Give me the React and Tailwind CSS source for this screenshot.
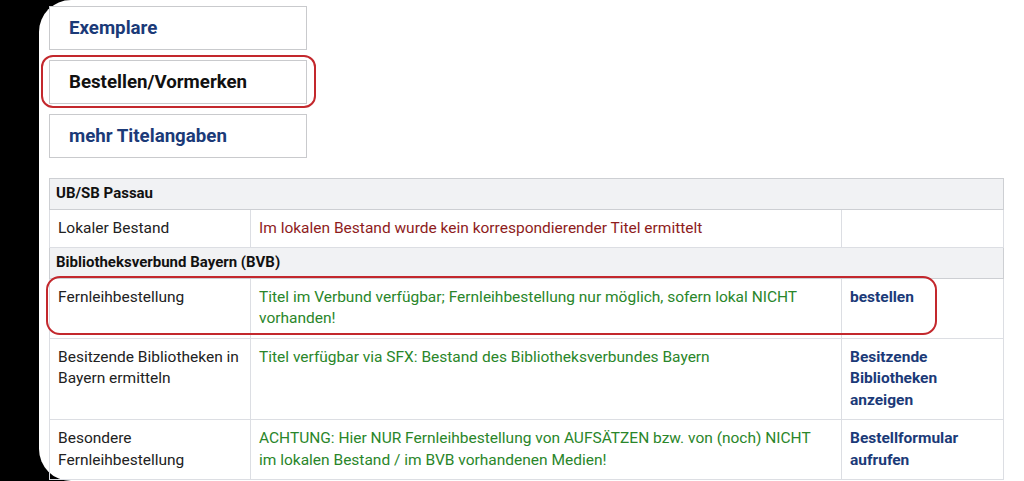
import React from 'react';

const rows = [
  { type: 'head', label: 'UB/SB Passau' },
  {
    type: 'row',
    label: 'Lokaler Bestand',
    text: 'Im lokalen Bestand wurde kein korrespondierender Titel ermittelt',
    tone: 'red',
    link: '',
  },
  { type: 'head', label: 'Bibliotheksverbund Bayern (BVB)' },
  {
    type: 'row',
    label: 'Fernleihbestellung',
    text: 'Titel im Verbund verfügbar; Fernleihbestellung nur möglich, sofern lokal NICHT vorhanden!',
    tone: 'green',
    link: 'bestellen',
  },
  {
    type: 'row',
    label: 'Besitzende Bibliotheken in Bayern ermitteln',
    text: 'Titel verfügbar via SFX: Bestand des Bibliotheksverbundes Bayern',
    tone: 'green',
    link: 'Besitzende Bibliotheken anzeigen',
  },
  {
    type: 'row',
    label: 'Besondere Fernleihbestellung',
    text: 'ACHTUNG: Hier NUR Fernleihbestellung von AUFSÄTZEN bzw. von (noch) NICHT im lokalen Bestand / im BVB vorhandenen Medien!',
    tone: 'green',
    link: 'Bestellformular aufrufen',
  },
];

const TabButton = ({ label, active, marked }) => (
  <div className="relative w-[258px]">
    <div className="h-[44px] border border-[#c9cacd] bg-white flex items-center pl-[19px]">
      <span className={`text-[18.7px] font-bold ${active ? 'text-[#111]' : 'text-[#1b3a78]'}`}>{label}</span>
    </div>
    {marked && (
      <div className="absolute -left-[8px] -right-[9px] -top-[5px] -bottom-[4px] rounded-[12px] border-2 border-[#c3282d]" />
    )}
  </div>
);

export default function App() {
  return (
    <div className="bg-black h-[481px] w-[1024px] overflow-hidden" style={{ fontFamily: 'Roboto, "Liberation Sans", sans-serif' }}>
      <div className="ml-[39px] h-[481px] bg-white rounded-tl-[32px] rounded-bl-[32px] pl-[10px] pt-[6px]">
        {/* Tabs */}
        <div className="flex flex-col gap-[10px]">
          <TabButton label="Exemplare" />
          <TabButton label="Bestellen/Vormerken" active marked />
          <TabButton label="mehr Titelangaben" />
        </div>

        {/* Availability table */}
        <div className="relative mt-[20px] w-[954px]">
          <table className="w-full table-fixed border-collapse text-[15.5px] leading-[21.5px]">
            <colgroup>
              <col className="w-[201px]" />
              <col className="w-[591px]" />
              <col className="w-[162px]" />
            </colgroup>
            <tbody>
              {rows.map((r, i) =>
                r.type === 'head' ? (
                  <tr key={i} className="bg-[#f1f2f4]">
                    <td colSpan={3} className="border border-[#cdcfd3] px-[6px] py-[4px] text-[15px] font-bold text-[#111]">
                      {r.label}
                    </td>
                  </tr>
                ) : (
                  <tr key={i} className="align-top">
                    <td className="border border-[#dcdee3] px-[8px] py-[8px] text-[#222]">{r.label}</td>
                    <td
                      className={`border border-[#dcdee3] pl-[8px] pr-[22px] py-[8px] ${
                        r.tone === 'red' ? 'text-[#8e1c1c]' : 'text-[#2a862a]'
                      }`}
                    >
                      {r.text}
                    </td>
                    <td className="border border-[#dcdee3] px-[8px] py-[8px] font-bold text-[#1b3a78]">{r.link}</td>
                  </tr>
                )
              )}
            </tbody>
          </table>
          {/* annotation around Fernleihbestellung row */}
          <div className="absolute left-[-3px] top-[98px] w-[891px] h-[59px] rounded-[14px] border-2 border-[#c3282d] pointer-events-none" />
        </div>
      </div>
    </div>
  );
}
